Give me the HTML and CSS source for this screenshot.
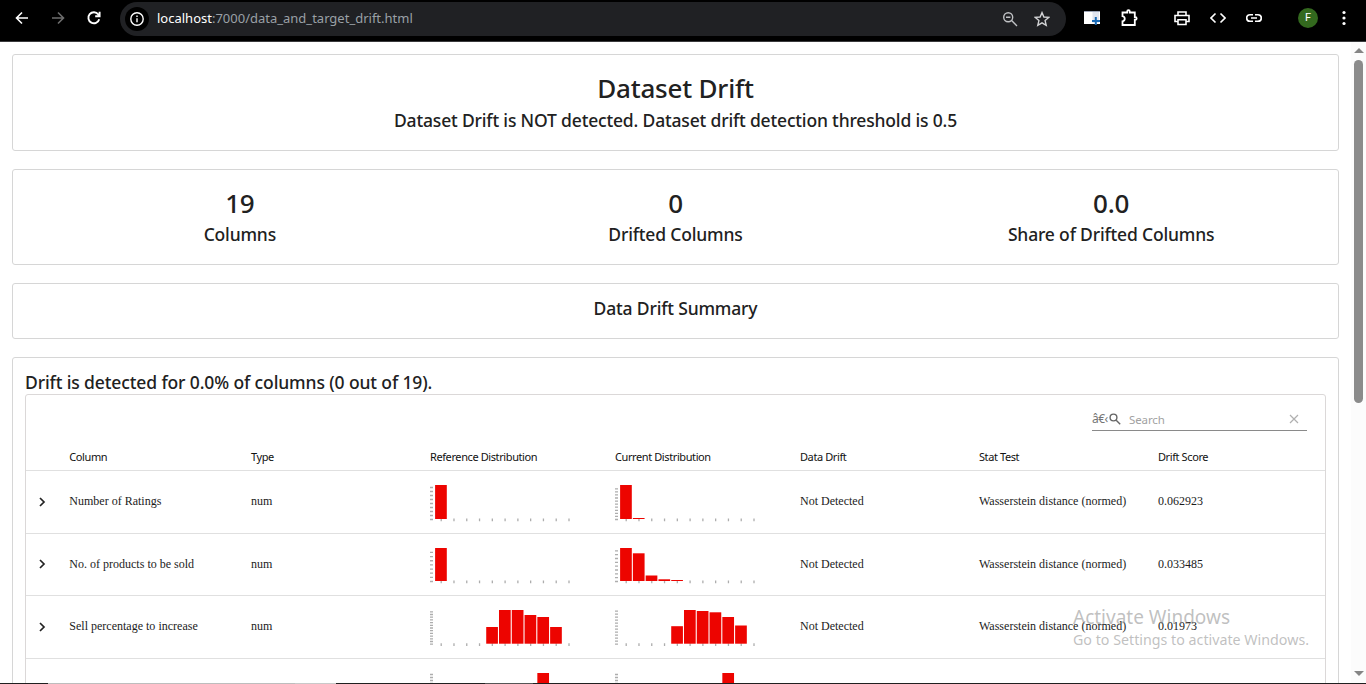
FILE: index.html
```html
<!DOCTYPE html>
<html lang="en">
<head>
<meta charset="utf-8">
<title>Data and Target Drift</title>
<link rel="stylesheet" href="styles.css">
</head>
<body>
<div class="window">
  <header class="toolbar">
    <svg class="icon nav-back" viewBox="0 0 16 16"><path d="M14 8H2.500M8 2.500 2.500 8 8 13.500"/></svg>
    <svg class="icon nav-forward" viewBox="0 0 16 16"><path d="M2 8h11.500M8 2.500 13.500 8 8 13.500"/></svg>
    <svg class="icon nav-reload" viewBox="0 0 16 16"><path d="M13.200 9.200A5.500 5.500 0 1 1 12.300 4.500L13.500 5.800M13.600 1.800V6.200H9.200"/></svg>
    <div class="address">
      <span class="info"><svg class="icon" viewBox="0 0 16 16"><circle cx="8" cy="8" r="6.200"/><path d="M8 7.200v4M8 4.500v1.500"/></svg></span>
      <span class="url"><b>localhost</b>:7000/data_and_target_drift.html</span>
      <svg class="icon zoom-out" viewBox="0 0 16 16"><circle cx="6.200" cy="6.200" r="4.500"/><path d="M9.600 9.600 15 15M4 6.200h4.400"/></svg>
      <svg class="icon star" viewBox="0 0 16 16"><path d="M8 1.600 9.900 6l4.800.4-3.600 3.200 1.100 4.700L8 11.800l-4.200 2.500 1.100-4.700L1.300 6.400 6.100 6z"/></svg>
    </div>
    <svg class="ext-tab" viewBox="0 0 16 16"><path fill="#fff" d="M0 1h16v13H0z"/><path fill="#e1e5ef" d="M8.500 2H15v11H8.500z"/><path stroke="#9ba3b5" d="M0 1.500h16"/><path stroke="#1769b5" stroke-width="2" d="M11.800 7v8M8 11h8"/></svg>
    <svg class="icon ext-puzzle" viewBox="0 0 18 18"><path d="M2.500 3.500h4.700V2.500a1.300 1.300 0 0 1 2.600 0v1h5v4.700h.6a1.200 1.200 0 0 1 0 2.500h-.6V16H2.500v-3.700c3-.6 3-4.500 0-5.100z"/></svg>
    <svg class="icon ext-print" viewBox="0 0 16 16"><path d="M4 5V2h8v3M4 11.500H1V5.500h14v6h-3M4 9.700h8v4.800H4z"/></svg>
    <svg class="icon ext-code" viewBox="0 0 16 16"><path d="M5.500 3.500 1 8l4.500 4.500M10.500 3.500 15 8l-4.500 4.500"/></svg>
    <svg class="icon ext-link" viewBox="0 0 16 16"><path d="M7 4.700H4a3.300 3.300 0 0 0 0 6.600h3M9 4.700h3a3.300 3.300 0 0 1 0 6.600H9M5 8h6"/></svg>
    <span class="avatar">F</span>
    <svg class="kebab" viewBox="0 0 4 16"><circle cx="2" cy="2.500" r="1.600"/><circle cx="2" cy="8" r="1.600"/><circle cx="2" cy="13.500" r="1.600"/></svg>
  </header>
  <div class="viewport">
    <main class="report">
      <section class="card card-title">
        <h1 class="big">Dataset Drift</h1>
        <p class="label">Dataset Drift is NOT detected. Dataset drift detection threshold is 0.5</p>
      </section>
      <section class="card card-counters">
        <div><div class="big">19</div><div class="label">Columns</div></div>
        <div><div class="big">0</div><div class="label">Drifted Columns</div></div>
        <div><div class="big">0.0</div><div class="label">Share of Drifted Columns</div></div>
      </section>
      <section class="card card-summary"><h2 class="label">Data Drift Summary</h2></section>
      <section class="card card-table">
        <h2 class="label detected">Drift is detected for 0.0% of columns (0 out of 19).</h2>
        <div class="table">
          <div class="search-row">
            <div class="search">
              <span class="mojibake">â€‹</span>
              <svg class="search-icon" viewBox="0 0 12 12"><circle cx="4.500" cy="4.500" r="3.400"/><path d="m7.200 7.200 4 4"/></svg>
              <span class="placeholder">Search</span>
              <svg class="clear" viewBox="0 0 10 10"><path d="m1 1 8 8M9 1 1 9"/></svg>
            </div>
          </div>
          <div class="row head">
            <span></span><span>Column</span><span>Type</span><span>Reference Distribution</span><span>Current Distribution</span><span>Data Drift</span><span>Stat Test</span><span>Drift Score</span>
          </div>
          <div id="rows"></div>
        </div>
      </section>
    </main>
    <aside class="scrollbar"><i class="arrow up"></i><i class="thumb"></i><i class="arrow down"></i></aside>
  </div>
  <footer class="taskbar"><i class="seg-light"></i><i class="seg-pale"></i><i class="seg-dark"></i><i class="seg-mid"></i></footer>
  <div class="watermark"><div class="wm-title">Activate Windows</div><div class="wm-text">Go to Settings to activate Windows.</div></div>
</div>
<script src="rows.js"></script>
</body>
</html>
```
FILE: styles.css
```css
* { box-sizing: border-box; }
body { margin: 0; background: #fff; color: #212121; font-family: "Noto Sans", "Open Sans", sans-serif; overflow: hidden; }
h1, h2, p { margin: 0; }
i { display: block; }
svg { display: block; flex: none; }
.window { position: relative; height: 684px; display: flex; flex-direction: column; overflow: hidden; }

.toolbar { flex: none; height: 42px; background: #000; border-bottom: 1px solid #3a3b3d; padding-bottom: 5px; display: flex; align-items: center; }
.icon { width: 16px; height: 16px; fill: none; stroke: #fff; stroke-width: 1.6; }
.nav-back { margin-left: 14px; }
.nav-forward { margin-left: 20px; stroke: #6d6d6d; }
.nav-reload { margin-left: 20px; stroke-width: 1.9; }
.address { flex: none; width: 946px; height: 34px; margin: 1px 0 0 18px; padding-left: 5px; border-radius: 17px; background: #202124; display: flex; align-items: center; }
.info { width: 24px; height: 24px; border-radius: 50%; background: #000; display: flex; align-items: center; justify-content: center; }
.info .icon { stroke-width: 1.4; }
.url { width: 845px; margin-left: 8px; margin-top: -2px; font-size: 13px; line-height: 18px; color: #9aa0a6; white-space: nowrap; }
.url b { font-weight: 400; color: #fff; }
.address .zoom-out { stroke: #c0c2c5; stroke-width: 1.4; }
.address .star { stroke: #d2d3d5; stroke-width: 1.4; margin-left: 16px; }
.ext-tab { width: 16px; height: 16px; margin-left: 18px; fill: none; }
.ext-puzzle { width: 18px; height: 18px; margin-left: 20px; stroke-width: 1.8; }
.ext-print { margin-left: 36px; }
.ext-code { margin-left: 20px; }
.ext-link { margin-left: 20px; }
.avatar { width: 20px; height: 20px; margin-left: 36px; border-radius: 50%; background: #33691e; color: #fff; font: 11px/20px Roboto, sans-serif; text-align: center; }
.kebab { width: 4px; height: 16px; margin-left: 24px; fill: #fff; }

.viewport { flex: 1; min-height: 0; display: flex; }
.report { flex: 1; min-width: 0; padding: 12px 12px 0; display: flex; flex-direction: column; gap: 18px; overflow: hidden; }
.card { flex: none; border: 1px solid #d6d6d6; border-radius: 3px; text-align: center; }
.big { font-size: 26px; line-height: 34px; font-weight: 500; letter-spacing: -0.2px; }
.label { font-size: 17.5px; line-height: 24px; font-weight: 500; letter-spacing: -0.17px; white-space: nowrap; }
.card-title { height: 97px; padding-top: 16px; }
.card-title .label { margin-top: 3px; }
.card-counters { height: 96px; padding-top: 16px; padding-left: 9px; padding-right: 9px; display: grid; grid-template-columns: repeat(3, 1fr); }
.card-counters .label { margin-top: 2px; }
.card-summary { height: 56px; padding-top: 12px; }
.card-table { height: 420px; padding: 12px 12px 0; text-align: left; }
.label.detected { letter-spacing: -0.12px; }
.table { border: 1px solid #dbd8d8; border-radius: 3px; height: 400px; }
.search-row { height: 48px; display: flex; justify-content: flex-end; padding: 13px 18px 0 0; }
.search { width: 215px; height: 23px; border-bottom: 1px solid #8a8a8a; display: flex; align-items: center; color: #757575; font-size: 11.5px; }
.mojibake { width: 17px; white-space: nowrap; font-size: 12px; line-height: 16px; letter-spacing: -0.5px; }
.search-icon { width: 12px; height: 12px; fill: none; stroke: #666; stroke-width: 1.4; }
.placeholder { width: 159.5px; margin-left: 8px; color: #a2a2a2; letter-spacing: -0.1px; }
.clear { width: 10px; height: 10px; fill: none; stroke: #b0b0b0; stroke-width: 1.2; }
.row { display: grid; grid-template-columns: 43.3px 181.7px 179px 185px 185px 179px 179px 1fr; align-items: center; border-bottom: 1px solid #e0e0e0; white-space: nowrap; }
.head { height: 28px; padding-bottom: 1px; font-size: 11px; letter-spacing: -0.4px; color: #111; }
.body-row { height: 63px; font: 12.03px/16px "Liberation Serif", serif; color: #1b1b1b; }
.body-row.short { height: 62px; }
.body-row > span { margin-top: -2px; }
.chevron { width: 8px; height: 10px; margin-left: 12px; fill: none; stroke: #222; stroke-width: 1.7; }
.short .chevron { margin-top: -2px; }
.chart { width: 150px; height: 62px; align-self: start; overflow: hidden; }
.chart .bars { fill: #ed0400; }
.chart .ticks { stroke: #adadad; stroke-width: 1.3; }

.scrollbar { flex: none; width: 15px; background: #fcfcfc; display: flex; flex-direction: column; align-items: center; }
.arrow { width: 0; height: 0; border: 5px solid transparent; }
.up { border-top: 0; border-bottom-color: #858585; margin-top: 6px; }
.down { border-bottom: 0; border-top-color: #858585; margin: auto 0 7px; }
.thumb { width: 9px; height: 343px; margin-top: 7px; border-radius: 5px; background: #8b8b8b; }
.taskbar { flex: none; height: 1px; padding-left: 48px; background: #202020; display: flex; }
.taskbar i { height: 1px; }
.seg-light { width: 247px; background: #bdbdbd; }
.seg-pale { width: 41px; background: #c9c9c9; }
.seg-dark { width: 149px; background: #202020; }
.seg-mid { width: 48px; background: #555; }
.watermark { position: absolute; left: 1073px; top: 604px; color: rgba(130, 130, 130, .5); white-space: nowrap; }
.wm-title { font-size: 19px; line-height: 26px; }
.wm-text { font-size: 14.25px; line-height: 20px; }
```
FILE: rows.js
```js
// Bars are [slot, height]; ticks are the number of y-axis marks and the step between them.
const rows = [
  { name: "Number of Ratings", score: "0.062923", base: 48,
    ref: { ticks: [9, 4], bars: [[0, 34]] },
    cur: { ticks: [11, 3.07], bars: [[0, 34], [1, 1]] } },
  { name: "No. of products to be sold", score: "0.033485", base: 47, short: true,
    ref: { ticks: [8, 4.15], bars: [[0, 33]] },
    cur: { ticks: [9, 3.83], bars: [[0, 33], [1, 27.7], [2, 5.5], [3, 1.7], [4, 1]] } },
  { name: "Sell percentage to increase", score: "0.01973", base: 47.7,
    ref: { ticks: [13, 2.7], bars: [[4, 16.7], [5, 33.7], [6, 33.7], [7, 28.7], [8, 26.7], [9, 16.7]] },
    cur: { ticks: [12, 3], bars: [[4, 17.5], [5, 33.7], [6, 32.7], [7, 31.4], [8, 26.7], [9, 18.2]] } },
  { name: "", score: "", base: 48,
    ref: { ticks: [12, 3], bars: [[8, 34]] },
    cur: { ticks: [12, 3], bars: [[8, 34]] } }
];

function chart(data, base) {
  let bars = "", ticks = "";
  for (const [slot, h] of data.bars)
    bars += `<rect x="${5.1 + slot * 12.78}" y="${base - h}" width="11.7" height="${h}"/>`;
  for (let i = 0; i < 11; i++) ticks += `M${11.2 + i * 12.78} ${base - 0.5}v2.8`;
  for (let i = 0; i < data.ticks[0]; i++) ticks += `M0 ${base + 0.5 - i * data.ticks[1]}h3`;
  return `<svg class="chart" viewBox="0 0 150 62"><path class="ticks" d="${ticks}"/><g class="bars">${bars}</g></svg>`;
}

document.getElementById("rows").innerHTML = rows.map(r => `
  <div class="row body-row${r.short ? " short" : ""}">
    ${r.name ? '<svg class="chevron" viewBox="0 0 8 10"><path d="m2 1 4 4-4 4"/></svg>' : "<i></i>"}
    <span>${r.name}</span><span>${r.name ? "num" : ""}</span>
    ${chart(r.ref, r.base)}${chart(r.cur, r.base)}
    <span>${r.name ? "Not Detected" : ""}</span>
    <span>${r.name ? "Wasserstein distance (normed)" : ""}</span>
    <span>${r.score}</span>
  </div>`).join("");
```
